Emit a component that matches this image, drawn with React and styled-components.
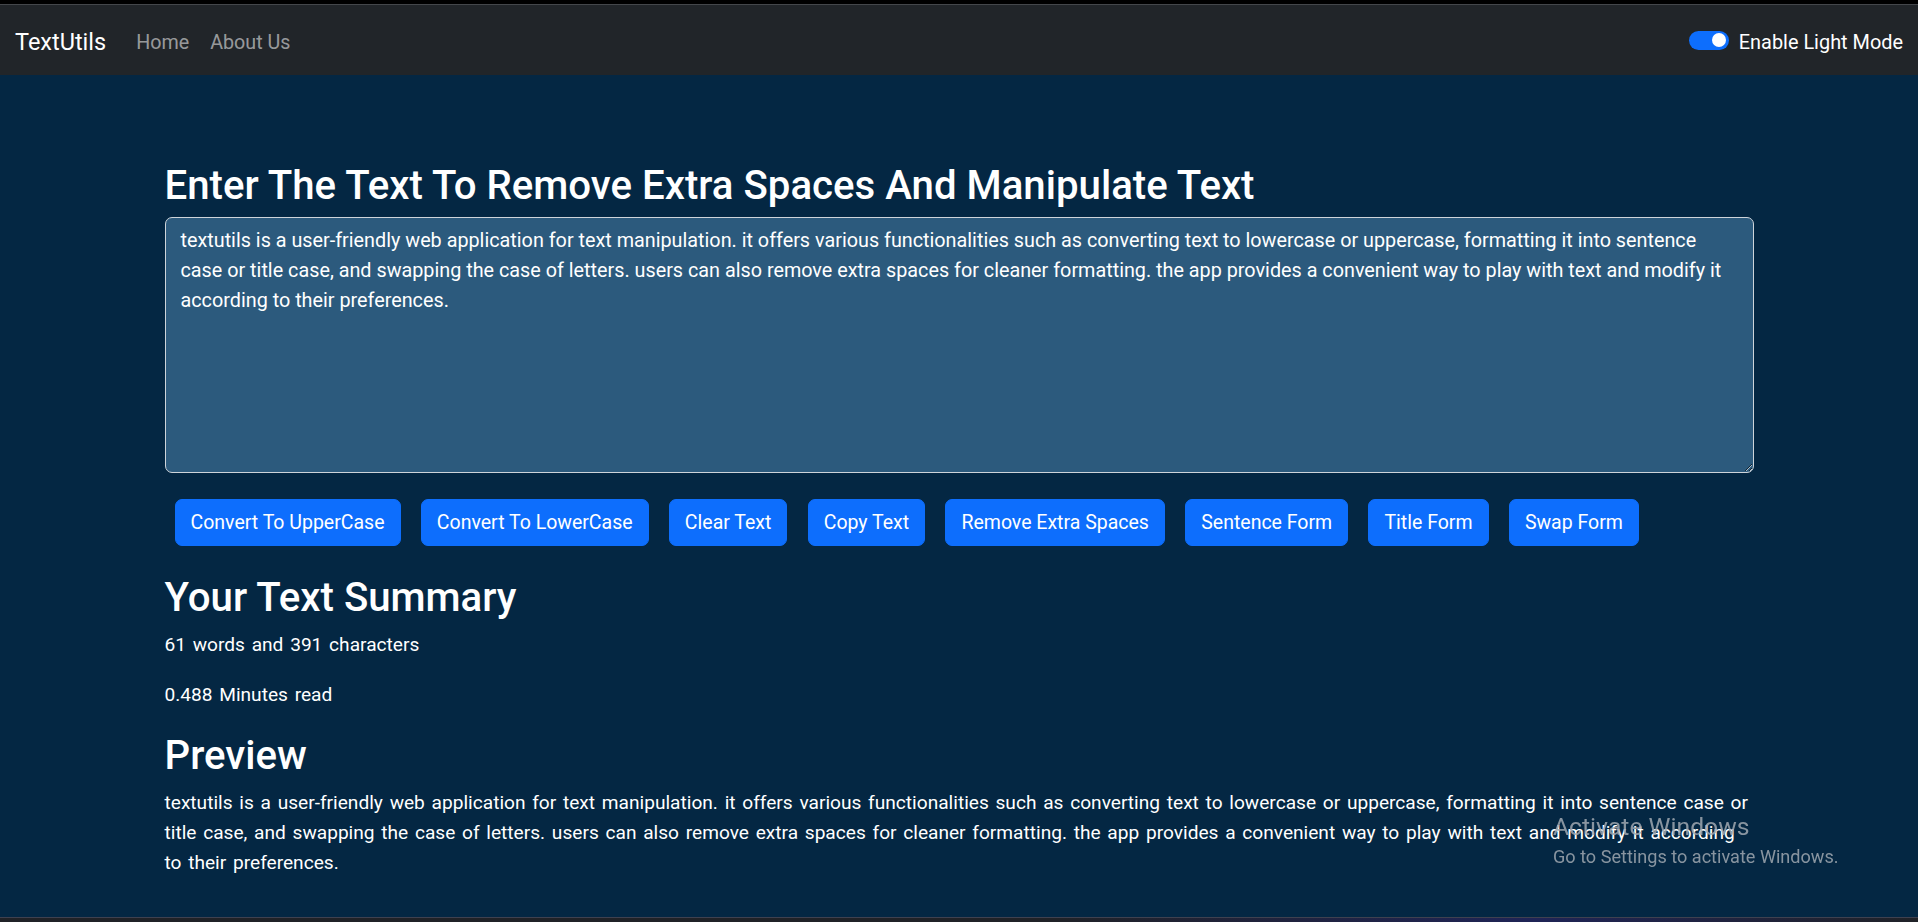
import React from 'react'
import styled, { createGlobalStyle } from 'styled-components'

const SAMPLE = 'textutils is a user-friendly web application for text manipulation. it offers various functionalities such as converting text to lowercase or uppercase, formatting it into sentence case or title case, and swapping the case of letters. users can also remove extra spaces for cleaner formatting. the app provides a convenient way to play with text and modify it according to their preferences.'

const ACTIONS = [
  'Convert To UpperCase',
  'Convert To LowerCase',
  'Clear Text',
  'Copy Text',
  'Remove Extra Spaces',
  'Sentence Form',
  'Title Form',
  'Swap Form',
]

const GlobalStyle = createGlobalStyle`
  * {
    box-sizing: border-box;
  }
  body {
    margin: 0;
    background: #042743;
    font-family: Roboto, "Noto Sans", sans-serif;
    color: #ffffff;
  }
`

const Page = styled.div`
  min-height: 100vh;
  display: flex;
  flex-direction: column;
  background: #042743;
`

const ScreenEdge = styled.div`
  height: 5px;
  background: #000000;
  border-bottom: 1px solid #44474b;
`

const Navbar = styled.nav`
  height: 70px;
  padding: 4px 15px 0;
  background: #212529;
  display: flex;
  align-items: center;
  justify-content: space-between;
`

const NavLeft = styled.div`
  display: flex;
  align-items: center;
`

const Brand = styled.a`
  font-size: 23.5px;
  color: #ffffff;
  text-decoration: none;
  margin-right: 30px;
`

const NavLinks = styled.ul`
  display: flex;
  gap: 21px;
  list-style: none;
  margin: 0;
  padding: 0;
`

const NavLink = styled.a`
  font-size: 19.7px;
  color: rgba(255, 255, 255, 0.55);
  text-decoration: none;
`

const ModeSwitch = styled.label`
  display: flex;
  align-items: center;
  gap: 10px;
  font-size: 19.9px;
  color: #ffffff;
`

const SwitchTrack = styled.span`
  position: relative;
  width: 40px;
  height: 19px;
  border-radius: 10px;
  background: #0d6efd;
  margin-top: -4px;

  &::after {
    content: '';
    position: absolute;
    top: 2.5px;
    right: 3px;
    width: 14px;
    height: 14px;
    border-radius: 50%;
    background: #ffffff;
  }
`

const Main = styled.main`
  flex: 1;
  padding-top: 87px;
`

const Container = styled.div`
  width: 100%;
  max-width: 1589px;
  margin: 0 auto;
`

const PageTitle = styled.h1`
  margin: 0 0 7px;
  font-size: 40.2px;
  font-weight: 500;
  line-height: 48px;
`

const Editor = styled.textarea`
  display: block;
  width: 100%;
  height: 256px;
  padding: 7.5px 15px;
  font-family: inherit;
  font-size: 19.8px;
  line-height: 30px;
  color: #ffffff;
  background: #2c5a7d;
  border: 1px solid #ced4da;
  border-radius: 7px;
  resize: vertical;
  outline: none;
`

const ButtonRow = styled.div`
  display: flex;
  flex-wrap: wrap;
  gap: 20.3px;
  margin-top: 26px;
  padding: 0 10px;
`

const ActionButton = styled.button`
  padding: 7.5px 15px;
  font-family: inherit;
  font-size: 19.5px;
  line-height: 30px;
  color: #ffffff;
  background: #0d6efd;
  border: 1px solid #0d6efd;
  border-radius: 7px;
  cursor: pointer;
`

const Section = styled.section`
  display: flex;
  flex-direction: column;
  margin-top: ${p => p.$top}px;
`

const SectionTitle = styled.h2`
  margin: 0 0 8.5px;
  font-size: 40.2px;
  font-weight: 500;
  line-height: 48px;
`

const Text = styled.p`
  margin: 0;
  font-size: 19.13px;
  line-height: 30px;
  word-spacing: 2px;

  & + & {
    margin-top: 20px;
  }
`

const Watermark = styled.div`
  position: fixed;
  left: 1553px;
  top: 811.6px;
  color: rgba(160, 168, 176, 0.85);
  pointer-events: none;
`

const WatermarkTitle = styled.div`
  font-size: 24.7px;
  line-height: 30px;
`

const WatermarkNote = styled.div`
  margin-top: 3px;
  font-size: 18.1px;
  line-height: 24px;
`

const TaskbarEdge = styled.div`
  height: 5px;
  border-top: 1px solid #3e4150;
  background: linear-gradient(90deg, #202227 55%, #1f2456 80%, #202227);
`

const countWords = text => text.split(/\s+/).filter(w => w.length > 0).length

export default function App() {
  const text = SAMPLE
  const words = countWords(text)

  return (
    <Page>
      <GlobalStyle />
      <ScreenEdge />
      <Navbar>
        <NavLeft>
          <Brand href="#">TextUtils</Brand>
          <NavLinks>
            <li><NavLink href="#">Home</NavLink></li>
            <li><NavLink href="#">About Us</NavLink></li>
          </NavLinks>
        </NavLeft>
        <ModeSwitch>
          <SwitchTrack />
          Enable Light Mode
        </ModeSwitch>
      </Navbar>

      <Main>
        <Container>
          <PageTitle>Enter The Text To Remove Extra Spaces And Manipulate Text</PageTitle>
          <Editor defaultValue={text} spellCheck={false} />
          <ButtonRow>
            {ACTIONS.map(label => (
              <ActionButton key={label}>{label}</ActionButton>
            ))}
          </ButtonRow>

          <Section $top={27.5}>
            <SectionTitle>Your Text Summary</SectionTitle>
            <Text>{words} words and {text.length} characters</Text>
            <Text>{(0.008 * words).toFixed(3)} Minutes read</Text>
          </Section>

          <Section $top={21.6}>
            <SectionTitle>Preview</SectionTitle>
            <Text>{text}</Text>
          </Section>
        </Container>
      </Main>

      <TaskbarEdge />

      <Watermark>
        <WatermarkTitle>Activate Windows</WatermarkTitle>
        <WatermarkNote>Go to Settings to activate Windows.</WatermarkNote>
      </Watermark>
    </Page>
  )
}
